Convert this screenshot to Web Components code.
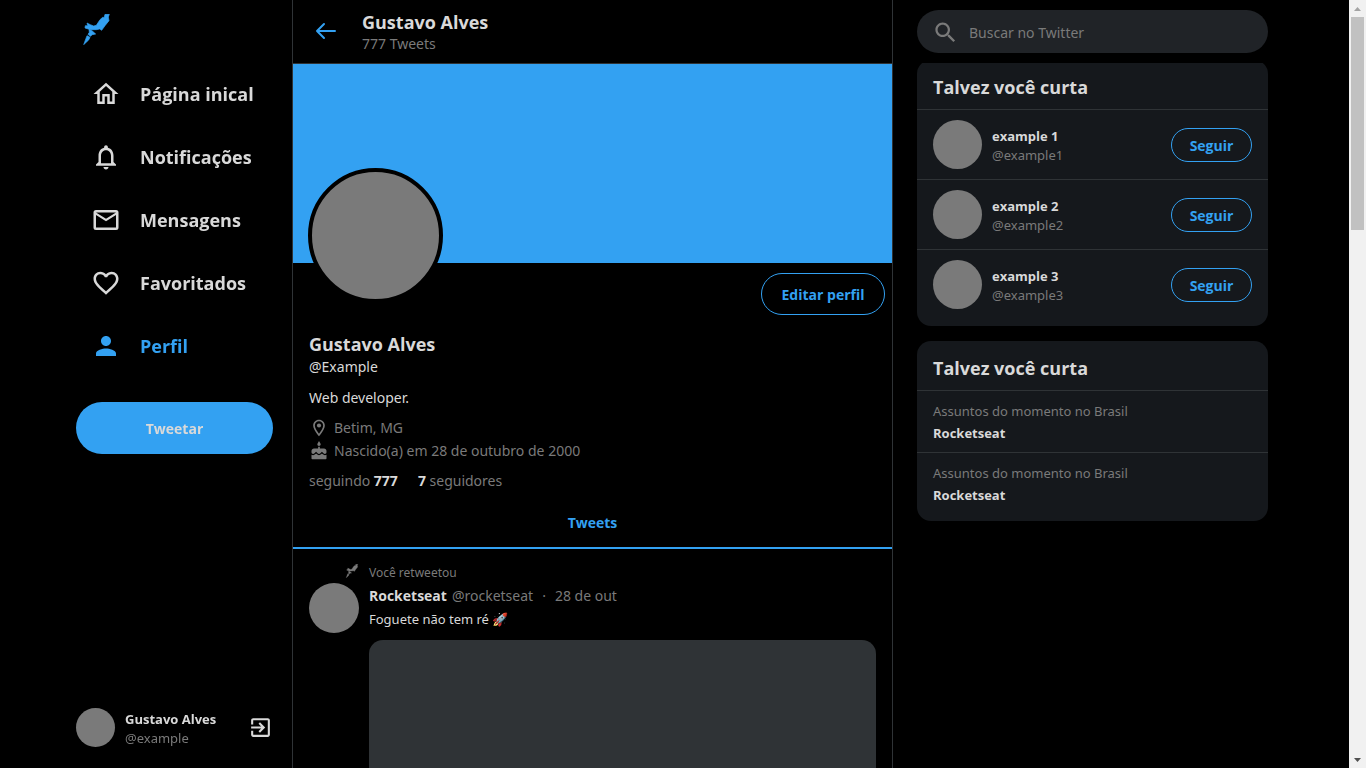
<!DOCTYPE html>
<html lang="pt-BR">
<head>
<meta charset="utf-8">
<meta name="viewport" content="width=device-width, initial-scale=1">
<title>Gustavo Alves / Twitter</title>
<style>
  :root {
    --primary: #000;
    --secondary: #15181c;
    --search: #202327;
    --white: #d9d9d9;
    --gray: #7a7a7a;
    --outline: #2f3336;
    --twitter: #33a1f2;
    --heading: "Open Sans", "Noto Sans", sans-serif;
  }
  body {
    margin: 0;
    background: var(--primary);
    color: var(--white);
    font-family: "Noto Sans", "Open Sans", sans-serif;
    font-size: 14px;
    line-height: 20px;
  }
</style>
</head>
<body>
<app-shell></app-shell>
<script>
const ICONS = {
  home: '<path d="M12 5.69l5 4.5V18h-2v-6H9v6H7v-7.81l5-4.5M12 3L2 12h3v8h6v-6h2v6h6v-8h3L12 3z"/>',
  bell: '<path d="M12 22c1.1 0 2-.9 2-2h-4c0 1.1.9 2 2 2zm6-6v-5c0-3.07-1.63-5.64-4.5-6.32V4c0-.83-.67-1.5-1.5-1.5s-1.5.67-1.5 1.5v.68C7.64 5.36 6 7.92 6 11v5l-2 2v1h16v-1l-2-2zm-2 1H8v-6c0-2.48 1.51-4.5 4-4.5s4 2.02 4 4.5v6z"/>',
  mail: '<path fill-rule="evenodd" d="M4 4H20A2 2 0 0 1 22 6V18A2 2 0 0 1 20 20H4A2 2 0 0 1 2 18V6A2 2 0 0 1 4 4ZM20 6L12 11L4 6ZM20 18V8L12 13L4 8V18Z"/>',
  heart: '<path d="M16.5 3c-1.74 0-3.41.81-4.5 2.09C10.91 3.81 9.24 3 7.5 3 4.42 3 2 5.42 2 8.5c0 3.78 3.4 6.86 8.55 11.54L12 21.35l1.45-1.32C18.6 15.36 22 12.28 22 8.5 22 5.42 19.58 3 16.5 3zm-4.4 15.55l-.1.1-.1-.1C7.14 14.24 4 11.39 4 8.5 4 6.5 5.5 5 7.5 5c1.54 0 3.04.99 3.57 2.36h1.87C13.46 5.99 14.96 5 16.5 5c2 0 3.5 1.5 3.5 3.5 0 2.89-3.14 5.74-7.9 10.05z"/>',
  person: '<path d="M12 12c2.21 0 4-1.79 4-4s-1.79-4-4-4-4 1.79-4 4 1.79 4 4 4zm0 2c-2.67 0-8 1.34-8 4v2h16v-2c0-2.66-5.33-4-8-4z"/>',
  pin: '<path d="M12 2C8.13 2 5 5.13 5 9c0 5.25 7 13 7 13s7-7.75 7-13c0-3.87-3.13-7-7-7zM7 9c0-2.76 2.24-5 5-5s5 2.24 5 5c0 2.88-2.88 7.19-5 9.88C9.92 16.21 7 11.85 7 9z"/><circle cx="12" cy="9" r="2.5"/>',
  cake: '<path d="M12 6c1.11 0 2-.9 2-2 0-.38-.1-.73-.29-1.03L12 0l-1.71 2.97c-.19.3-.29.65-.29 1.03 0 1.1.9 2 2 2zm4.6 9.99l-1.07-1.07-1.08 1.07c-1.3 1.3-3.58 1.31-4.89 0l-1.07-1.07-1.09 1.07C6.75 16.64 5.88 17 4.96 17c-.73 0-1.4-.23-1.96-.61V21c0 .55.45 1 1 1h16c.55 0 1-.45 1-1v-4.61c-.56.38-1.23.61-1.96.61-.92 0-1.79-.36-2.44-1.01zM18 9h-5V7h-2v2H6c-1.66 0-3 1.34-3 3v1.54c0 1.08.88 1.96 1.96 1.96.52 0 1.02-.2 1.38-.57l2.14-2.13 2.13 2.13c.74.74 2.03.74 2.77 0l2.14-2.13 2.13 2.13c.37.37.86.57 1.38.57 1.08 0 1.96-.88 1.96-1.96V12C21 10.34 19.66 9 18 9z"/>',
  exit: '<path d="M10.09 15.59L11.5 17l5-5-5-5-1.41 1.41L12.67 11H3v2h9.67l-2.58 2.59zM19 3H5c-1.11 0-2 .9-2 2v4h2V5h14v14H5v-4H3v4c0 1.1.89 2 2 2h14c1.1 0 2-.9 2-2V5c0-1.1-.9-2-2-2z"/>',
  search: '<path d="M15.5 14h-.79l-.28-.27C15.41 12.59 16 11.11 16 9.5 16 5.91 13.09 3 9.5 3S3 5.91 3 9.5 5.91 16 9.5 16c1.61 0 3.09-.59 4.23-1.57l.27.28v.79l5 4.99L20.49 19l-4.99-5zm-6 0C7.01 14 5 11.99 5 9.5S7.01 5 9.5 5 14 7.01 14 9.5 11.99 14 9.5 14z"/>',
  arrow: '<path d="M10 19l-7-7m0 0l7-7m-7 7h18" fill="none" stroke="currentColor" stroke-width="2" stroke-linecap="round" stroke-linejoin="round"/>',
  rocket: '<g stroke="currentColor" stroke-width="2" stroke-linejoin="round"><path d="M106 43H119L116 51L118 62L106 77L96 91L90 87L80 89H62L46 84L47 77L54 77L52 69L62 74L72 78L80 76L91 59L99 52L103 53Z"/><path d="M58 88L68 93L78 102L68 104L62 109L55 103L59 97Z"/><path d="M52 107L61 112L57 120L42 134Z"/></g>'
};

function define(name, html, setup) {
  const template = document.createElement('template');
  template.innerHTML = html;
  customElements.define(name, class extends HTMLElement {
    constructor() {
      super();
      this.attachShadow({ mode: 'open' }).append(template.content.cloneNode(true));
    }
    connectedCallback() {
      if (setup) setup(this, this.shadowRoot);
    }
  });
}

define('ui-icon', `
  <style>
    :host { display: block; flex: none; width: var(--size, 24px); height: var(--size, 24px); }
    svg { display: block; width: 100%; height: 100%; fill: currentColor; }
  </style>
  <svg aria-hidden="true"></svg>`, (host, root) => {
  const name = host.getAttribute('name');
  const svg = root.querySelector('svg');
  svg.setAttribute('viewBox', name === 'rocket' ? '34 42 93 93' : '0 0 24 24');
  svg.innerHTML = ICONS[name] || '';
});

define('user-avatar', `
  <style>
    :host { display: block; flex: none; width: var(--size, 49px); height: var(--size, 49px);
            border-radius: 50%; background: var(--gray); }
  </style>`);

define('nav-item', `
  <style>
    :host { display: block; color: var(--white); }
    :host([active]) { color: var(--twitter); }
    a { display: flex; align-items: center; gap: 19px; height: 63px; padding-left: 15px; color: inherit;
        text-decoration: none; font-family: var(--heading); font-size: 18px; font-weight: 700; line-height: 24px; }
    ui-icon { --size: 30px; }
  </style>
  <a href="#"><ui-icon></ui-icon><slot></slot></a>`, (host, root) => {
  const icon = document.createElement('ui-icon');
  icon.setAttribute('name', host.getAttribute('icon'));
  root.querySelector('ui-icon').replaceWith(icon);
});

define('menu-bar', `
  <style>
    :host { display: flex; flex-direction: column; justify-content: space-between;
            position: sticky; top: 0; height: 100vh; box-sizing: border-box; padding: 0 19px 20px 20px; }
    .logo { display: block; height: 48px; padding: 14px 0 0 5px; color: var(--twitter); }
    .logo ui-icon { --size: 31px; }
    .tweet { width: 100%; height: 52px; margin-top: 25px; border: 0; border-radius: 26px;
             background: var(--twitter); color: var(--white); font-family: var(--heading);
             font-size: 14px; font-weight: 700; }
    footer { display: flex; align-items: center; }
    footer user-avatar { --size: 39px; }
    .who { flex: 1; margin-left: 10px; padding-top: 3px; font-size: 13px; line-height: 19px; }
    .who strong, .who span { display: block; }
    .who strong { font-family: var(--heading); }
    .who span { color: var(--gray); }
    .exit { padding: 0; border: 0; background: none; color: var(--white); }
    .exit ui-icon { --size: 25px; }
  </style>
  <div>
    <a class="logo" href="#" aria-label="Início"><ui-icon name="rocket"></ui-icon></a>
    <nav>
      <nav-item icon="home">Página inical</nav-item>
      <nav-item icon="bell">Notificações</nav-item>
      <nav-item icon="mail">Mensagens</nav-item>
      <nav-item icon="heart">Favoritados</nav-item>
      <nav-item icon="person" active>Perfil</nav-item>
    </nav>
    <button class="tweet">Tweetar</button>
  </div>
  <footer>
    <user-avatar></user-avatar>
    <div class="who"><strong>Gustavo Alves</strong><span>@example</span></div>
    <button class="exit" aria-label="Sair"><ui-icon name="exit"></ui-icon></button>
  </footer>`);

define('page-header', `
  <style>
    :host { display: flex; align-items: center; gap: 24px; position: sticky; top: 0; z-index: 2;
            box-sizing: border-box; height: 64px; padding: 0 0 1px 21px; background: var(--primary);
            border-bottom: 1px solid var(--outline); }
    button { padding: 0; border: 0; background: none; color: var(--twitter); }
    .text { padding-top: 2px; }
    h1 { margin: 0; font-family: var(--heading); font-size: 18px; line-height: 24px; }
    span { display: block; color: var(--gray); line-height: 20px; }
  </style>
  <button aria-label="Voltar"><ui-icon name="arrow"></ui-icon></button>
  <div class="text"><h1><slot></slot></h1><span>777 Tweets</span></div>`);

define('profile-card', `
  <style>
    :host { display: block; }
    .banner { position: relative; height: 199px; background: var(--twitter); }
    .banner user-avatar { --size: 127px; position: absolute; left: 15px; bottom: -40px; border: 4px solid var(--primary); }
    .info { display: flow-root; padding: 10px 7px 0 16px; }
    .edit { float: right; min-width: 124px; height: 42px; padding: 0 19px; border: 1px solid var(--twitter);
            border-radius: 21px; background: none; color: var(--twitter); font-family: var(--heading);
            font-size: 14px; font-weight: 700; }
    h2 { margin: 59px 0 0; font-family: var(--heading); font-size: 18px; line-height: 24px; }
    p { margin: 0; }
    .handle { line-height: 21px; }
    .bio { margin-top: 10px; line-height: 21px; }
    ul { margin: 8px 0 0; padding: 0; list-style: none; color: var(--gray); }
    li { display: flex; align-items: center; gap: 5px; line-height: 23px; }
    li ui-icon { --size: 20px; }
    .stats { display: flex; gap: 20px; margin-top: 8px; color: var(--gray); line-height: 22px; }
    .stats strong { color: var(--white); font-family: var(--heading); }
  </style>
  <div class="banner"><user-avatar></user-avatar></div>
  <div class="info">
    <button class="edit">Editar perfil</button>
    <h2>Gustavo Alves</h2>
    <p class="handle">@Example</p>
    <p class="bio">Web developer.</p>
    <ul>
      <li><ui-icon name="pin"></ui-icon>Betim, MG</li>
      <li><ui-icon name="cake"></ui-icon>Nascido(a) em 28 de outubro de 2000</li>
    </ul>
    <div class="stats"><span>seguindo <strong>777</strong></span><span><strong>7</strong> seguidores</span></div>
  </div>`);

define('tweet-post', `
  <style>
    :host { display: block; padding: 14px 16px; border-bottom: 1px solid var(--outline); }
    .retweet { display: flex; align-items: center; gap: 10px; padding-left: 36px; color: var(--gray);
               font-size: 12px; line-height: 20px; }
    .retweet ui-icon { --size: 14px; margin-top: -4px; }
    .body { display: flex; gap: 10px; }
    user-avatar { --size: 50px; }
    .content { flex: 1; min-width: 0; }
    .head { display: flex; gap: 5px; line-height: 25px; color: var(--gray); }
    .head strong { color: var(--white); font-family: var(--heading); }
    .dot { margin: 0 4px; }
    p { margin: 0; font-size: 13px; line-height: 23px; }
    .image { height: 285px; margin-top: 9px; border-radius: 14px; background: var(--outline); }
  </style>
  <article>
    <div class="retweet"><ui-icon name="rocket"></ui-icon>Você retweetou</div>
    <div class="body">
      <user-avatar></user-avatar>
      <div class="content">
        <div class="head"><strong>Rocketseat</strong><span>@rocketseat</span><span class="dot">·</span><time>28 de out</time></div>
        <p><slot></slot></p>
        <div class="image"></div>
      </div>
    </div>
  </article>`);

define('profile-feed', `
  <style>
    :host { display: block; border: solid var(--outline); border-width: 0 1px; }
    .tab { display: block; padding: 21px 0 14px; border-bottom: 2px solid var(--twitter); color: var(--twitter);
           font-family: var(--heading); font-weight: 700; line-height: 20px; text-align: center; text-decoration: none; }
  </style>
  <page-header>Gustavo Alves</page-header>
  <profile-card></profile-card>
  <a class="tab" href="#">Tweets</a>
  <tweet-post>Foguete não tem ré 🚀</tweet-post>`);

define('search-box', `
  <style>
    :host { display: block; position: sticky; top: 0; z-index: 2; padding: 10px 0; background: var(--primary); }
    label { display: flex; align-items: center; gap: 10px; box-sizing: border-box; height: 43px;
            padding: 2px 15px 0; border-radius: 22px; background: var(--search); color: var(--gray); }
    ui-icon { --size: 27px; }
    input { flex: 1; min-width: 0; padding: 0; border: 0; outline: 0; background: none; color: var(--white);
            font-family: inherit; font-size: 14px; line-height: 20px; }
    input::placeholder { color: var(--gray); opacity: 1; }
  </style>
  <label><ui-icon name="search"></ui-icon><input type="search" placeholder="Buscar no Twitter" aria-label="Buscar no Twitter"></label>`);

define('side-panel', `
  <style>
    :host { display: block; padding-bottom: 7px; border-radius: 14px; background: var(--secondary); }
    h2 { margin: 0; padding: 15px 16px 10px; font-family: var(--heading); font-size: 18px; line-height: 24px; }
  </style>
  <h2><slot name="title"></slot></h2><slot></slot>`);

define('follow-row', `
  <style>
    :host { display: flex; align-items: center; padding: 10px 16px; border-top: 1px solid var(--outline); }
    .who { flex: 1; margin-left: 10px; padding-top: 2px; font-size: 13px; line-height: 19px; }
    .who strong, .who span { display: block; }
    .who strong { font-family: var(--heading); }
    .who span { color: var(--gray); }
    button { min-width: 81px; height: 34px; padding: 2px 16px 0; border: 1px solid var(--twitter); border-radius: 17px;
             background: none; color: var(--twitter); font-family: var(--heading); font-size: 14px; font-weight: 700; }
  </style>
  <user-avatar></user-avatar>
  <div class="who"><strong><slot></slot></strong><span><slot name="handle"></slot></span></div>
  <button>Seguir</button>`);

define('news-row', `
  <style>
    :host { display: block; padding: 9px 16px 8px; border-top: 1px solid var(--outline); font-size: 13px; line-height: 22px; }
    span, strong { display: block; }
    strong { font-family: var(--heading); }
    span { color: var(--gray); }
  </style>
  <span>Assuntos do momento no Brasil</span><strong><slot></slot></strong>`);

define('side-bar', `
  <style>
    :host { display: block; padding: 0 25px 0 24px; }
    .stack { display: grid; gap: 15px; margin-top: -3px; }
  </style>
  <search-box></search-box>
  <div class="stack">
    <side-panel>
      <span slot="title">Talvez você curta</span>
      <follow-row>example 1<span slot="handle">@example1</span></follow-row>
      <follow-row>example 2<span slot="handle">@example2</span></follow-row>
      <follow-row>example 3<span slot="handle">@example3</span></follow-row>
    </side-panel>
    <side-panel>
      <span slot="title">Talvez você curta</span>
      <news-row>Rocketseat</news-row>
      <news-row>Rocketseat</news-row>
    </side-panel>
  </div>`);

define('scroll-rail', `
  <style>
    :host { display: flex; flex-direction: column; flex: none; width: 17px; background: #f1f1f1; }
    svg { display: block; flex: none; width: 17px; height: 17px; fill: #a3a3a3; }
    .down { fill: #505050; }
    .track { flex: 1; padding: 0 2px; }
    .thumb { height: 29%; background: #c1c1c1; }
  </style>
  <svg viewBox="0 0 17 17" aria-hidden="true"><path d="M5 11L8.5 7L12 11Z"/></svg>
  <div class="track"><div class="thumb"></div></div>
  <svg class="down" viewBox="0 0 17 17" aria-hidden="true"><path d="M5 7L8.5 11L12 7Z"/></svg>`);

define('app-shell', `
  <style>
    :host { display: flex; height: 100vh; }
    .view { flex: 1; min-width: 0; overflow-y: auto; scrollbar-width: none; }
    .columns { display: grid; grid-template-columns: 236px minmax(0, 601px) 400px; justify-content: center;
               align-items: start; }
  </style>
  <div class="view"><div class="columns">
    <menu-bar></menu-bar>
    <main><profile-feed></profile-feed></main>
    <side-bar></side-bar>
  </div></div>
  <scroll-rail></scroll-rail>`);
</script>
</body>
</html>
